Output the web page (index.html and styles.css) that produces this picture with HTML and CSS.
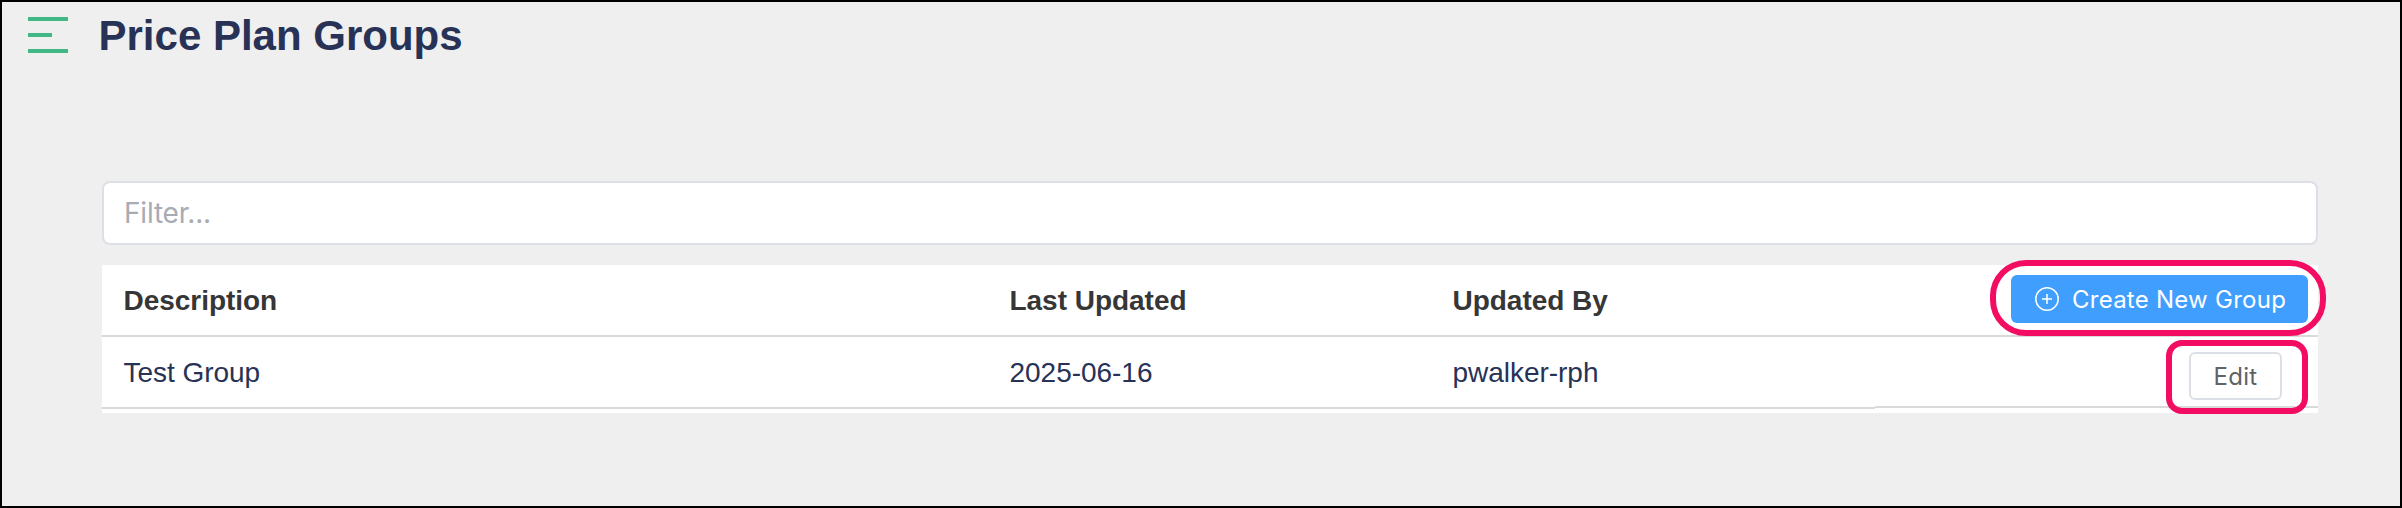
FILE: index.html
```
<!DOCTYPE html>
<html lang="en">
<head>
<meta charset="utf-8">
<title>Price Plan Groups</title>
<link rel="stylesheet" href="styles.css">
</head>
<body>
<div class="page">
  <header class="header">
    <svg class="menu-icon" width="40" height="36" viewBox="0 0 40 36" fill="#41b883" shape-rendering="crispEdges">
      <path d="M0 0h40v4H0zM0 16h24v4H0zM0 32h40v4H0z"/>
    </svg>
    <h1 class="title">Price Plan Groups</h1>
  </header>
  <main class="content">
    <input class="filter" type="text" placeholder="Filter...">
    <div class="table">
      <div class="row head">
        <div class="cell">Description</div>
        <div class="cell">Last Updated</div>
        <div class="cell">Updated By</div>
        <div class="cell actions">
          <span class="mark mark-create"><button class="btn primary">
            <svg class="plus" width="24" height="24" viewBox="0 0 24 24" fill="none" stroke="#fff" stroke-width="1.5">
              <circle cx="12" cy="12" r="11.2"/><path d="M12 7v10M7 12h10"/>
            </svg><span class="label">Create New Group</span></button></span>
        </div>
      </div>
      <div class="row">
        <div class="cell">Test Group</div>
        <div class="cell">2025-06-16</div>
        <div class="cell">pwalker-rph</div>
        <div class="cell actions">
          <span class="mark mark-edit"><button class="btn plain"><span class="label">Edit</span></button></span>
        </div>
      </div>
    </div>
  </main>
</div>
</body>
</html>
```
FILE: styles.css
```
* { box-sizing: border-box; }
body { margin: 0; }
.page {
  width: 2402px;
  height: 508px;
  border: 2px solid #000;
  background: #efefef;
  font-family: "Liberation Sans", Arial, sans-serif;
  color: #273256;
  overflow: hidden;
}
.header {
  display: flex;
  align-items: flex-start;
  height: 179px;
  padding: 15px 0 0 26px;
}
.menu-icon { display: block; }
.title {
  margin: -5px 0 0 30.5px;
  font-size: 42px;
  line-height: 48px;
  font-weight: 700;
  white-space: nowrap;
}
.content { width: 2216px; margin-left: 100px; }
.filter {
  display: block;
  width: 100%;
  height: 64px;
  padding: 0 20px;
  border: 2px solid #dcdfe6;
  border-radius: 8px;
  background: #fff;
  font: 28px/60px Inter, sans-serif;
  letter-spacing: -0.2px;
}
.filter::placeholder { color: #a8abb2; opacity: 1; }
.table { height: 148px; margin-top: 20px; background: #fff; }
.row {
  display: grid;
  grid-template-columns: 886px 443px 444px 443px;
  height: 72px;
  font-size: 28px;
  line-height: 32px;
  letter-spacing: -0.03px;
}
.cell {
  height: 72px;
  padding: 20px 22px 18px 21.5px;
  border-bottom: 2px solid #dadada;
  white-space: nowrap;
}
.head { font-weight: 700; color: #363636; }
.cell.actions {
  display: flex;
  justify-content: flex-end;
  padding: 0;
}
.row:not(.head) .actions { height: 71px; }
.mark {
  flex: none;
  display: flex;
  align-items: center;
  justify-content: center;
  border: 6px solid #f20d63;
}
.mark-create {
  width: 336px;
  height: 76px;
  margin: -5px -8px 0 0;
  border-radius: 36px;
}
.mark-edit {
  width: 142px;
  height: 74px;
  margin: 3px 10px 0 0;
  border-radius: 16px;
}
.btn {
  display: flex;
  align-items: center;
  height: 48px;
  margin: 0;
  padding: 0;
  border-radius: 6px;
  font: 400 24px/28px Inter, sans-serif;
  letter-spacing: 0.25px;
  white-space: nowrap;
}
.label { padding-top: 1px; }
.primary {
  width: 297px;
  margin: 2px 0 0 3px;
  padding-left: 24px;
  border: 0;
  background: #409eff;
  color: #fff;
}
.plus { flex: none; margin-right: 13px; }
.plain {
  width: 93px;
  margin: -2px 0 0 -3px;
  justify-content: center;
  border: 2px solid #dcdfe6;
  background: #fff;
  color: #606266;
}
```
